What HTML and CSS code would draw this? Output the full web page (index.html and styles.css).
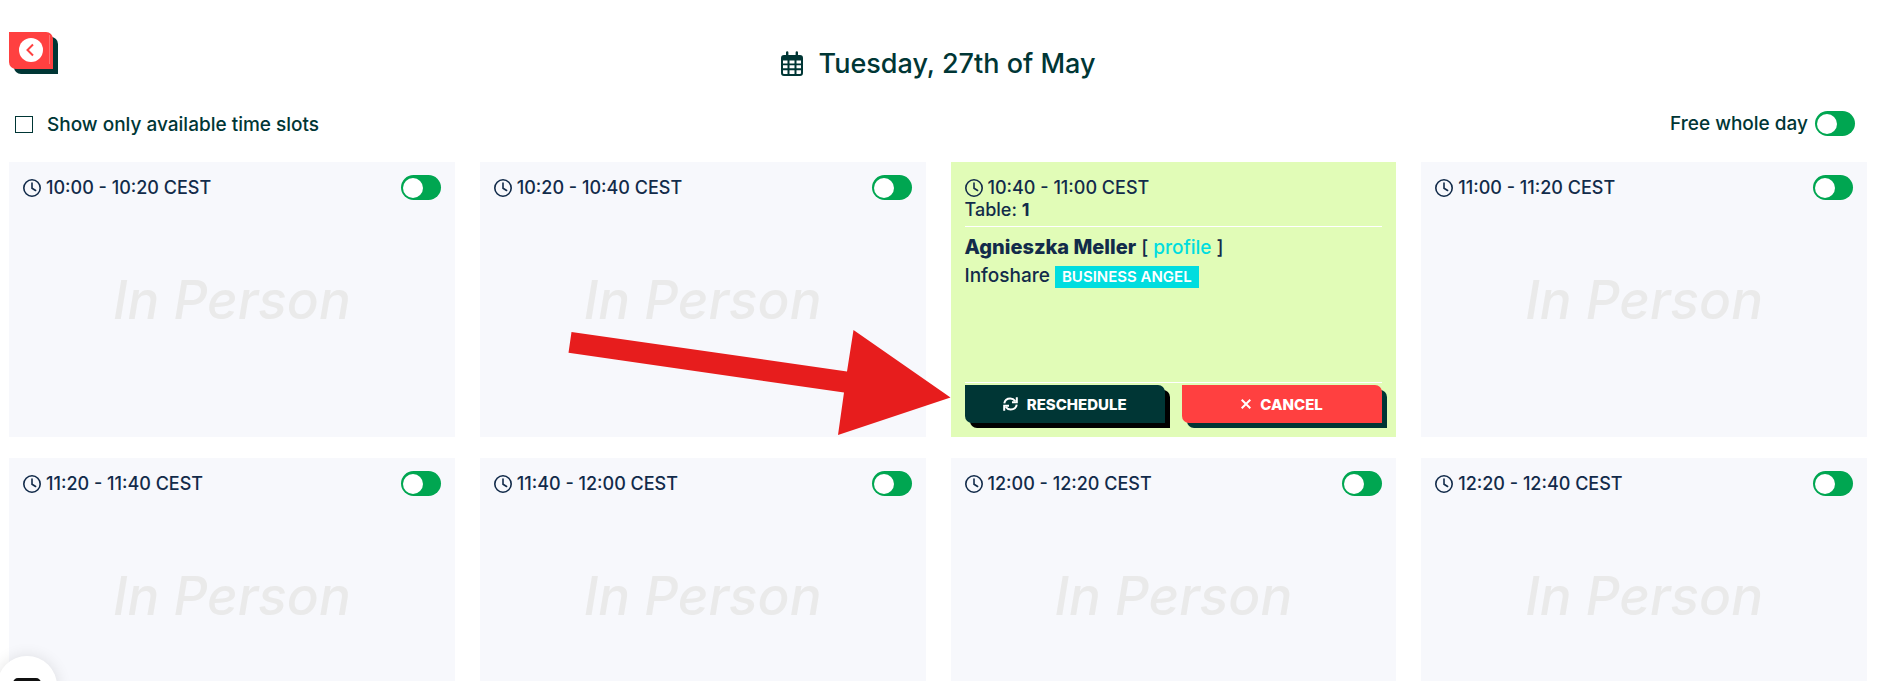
FILE: index.html
```html
<!DOCTYPE html>
<html lang="en">
<head>
    <meta charset="utf-8">
    <title>Tuesday, 27th of May</title>
    <link rel="stylesheet" href="styles.css">
</head>
<body>
    <!-- shared icons -->
    <svg class="sprite" aria-hidden="true">
        <symbol id="clock" viewBox="0 0 18 18">
            <circle cx="9" cy="9" r="8.2" fill="none" stroke="currentColor" stroke-width="1.6"/>
            <path d="M9 4v5.2l3.6 2.3" fill="none" stroke="currentColor" stroke-width="1.6" stroke-linecap="round"/>
        </symbol>
    </svg>

    <main class="schedule">
        <header class="day-header">
            <button class="btn btn-back" aria-label="Back">
                <svg width="24" height="24" viewBox="0 0 24 24">
                    <circle cx="12" cy="12" r="12" fill="#fff"/>
                    <path d="M14 6.500L8.500 12l5.500 5.500" fill="none" stroke="#ff4040" stroke-width="2"/>
                </svg>
            </button>
            <h1 class="day-title">
                <svg width="22" height="26" viewBox="0 0 22 26">
                    <path fill="currentColor" fill-rule="evenodd" d="M5 1.500a1 1 0 0 1 2.400 0V4h7.200V1.500a1 1 0 0 1 2.400 0V4H19a3 3 0 0 1 3 3v15a3 3 0 0 1-3 3H3a3 3 0 0 1-3-3V7a3 3 0 0 1 3-3h2zM2 9.500v3h4.500v-3zM8.500 9.500v3h5v-3zM15.500 9.500v3H20v-3zM2 14.300v3h4.500v-3zM8.500 14.300v3h5v-3zM15.500 14.300v3H20v-3zM2 19.200V22a1 1 0 0 0 1 1h3.500v-3.800zM8.500 19.200V23h5v-3.800zM15.500 19.200V23H19a1 1 0 0 0 1-1v-2.800z"/>
                </svg>
                Tuesday, 27th of May
            </h1>
        </header>

        <div class="filters">
            <label class="filter-label"><input type="checkbox" class="check"> Show only available time slots</label>
            <label class="free-day">Free whole day <input type="checkbox" class="switch"></label>
        </div>

        <section class="slots">
            <article class="slot">
                <div class="slot-head">
                    <span class="time"><svg class="clock"><use href="#clock"/></svg>10:00 - 10:20 CEST</span>
                    <input type="checkbox" class="switch" aria-label="10:00 - 10:20">
                </div>
                <p class="mode">In Person</p>
            </article>

            <article class="slot">
                <div class="slot-head">
                    <span class="time"><svg class="clock"><use href="#clock"/></svg>10:20 - 10:40 CEST</span>
                    <input type="checkbox" class="switch" aria-label="10:20 - 10:40">
                </div>
                <p class="mode">In Person</p>
                <svg class="arrow" viewBox="568 330 383 106" aria-hidden="true">
                    <path fill="#e71d1d" d="M571.500 332L847 371.500L853.500 330L950.500 397.500L838 435L844 392.500L568.500 352.700z"/>
                </svg>
            </article>

            <article class="slot booked">
                <div class="slot-head">
                    <span class="time"><svg class="clock"><use href="#clock"/></svg>10:40 - 11:00 CEST</span>
                </div>
                <p class="table-no">Table: <b>1</b></p>
                <div class="guest">
                    <p class="guest-name"><strong>Agnieszka Meller</strong> [ <a href="#">profile</a> ]</p>
                    <p class="guest-org">Infoshare <span class="badge">BUSINESS ANGEL</span></p>
                </div>
                <div class="actions">
                    <button class="btn btn-reschedule">
                        <svg width="15" height="14" viewBox="0 0 15 14" fill="none" stroke="currentColor" stroke-width="2">
                            <path d="M1.300 6.300C1.800 3.300 4.300 1.500 7.300 1.500c2.200 0 3.700 1 5 2.700M13.700 7.700c-.5 3-3 4.800-6 4.800-2.200 0-3.700-1-5-2.700"/>
                            <path d="M13.800.3v4.900H9M1.200 13.700V8.800H6"/>
                        </svg>
                        RESCHEDULE
                    </button>
                    <button class="btn btn-cancel">
                        <svg width="10" height="10" viewBox="0 0 10 10" fill="none" stroke="currentColor" stroke-width="2">
                            <path d="M.7.7l8.600 8.600M9.300.7L.7 9.300"/>
                        </svg>
                        CANCEL
                    </button>
                </div>
            </article>

            <article class="slot">
                <div class="slot-head">
                    <span class="time"><svg class="clock"><use href="#clock"/></svg>11:00 - 11:20 CEST</span>
                    <input type="checkbox" class="switch" aria-label="11:00 - 11:20">
                </div>
                <p class="mode">In Person</p>
            </article>

            <article class="slot">
                <div class="slot-head">
                    <span class="time"><svg class="clock"><use href="#clock"/></svg>11:20 - 11:40 CEST</span>
                    <input type="checkbox" class="switch" aria-label="11:20 - 11:40">
                </div>
                <p class="mode">In Person</p>
            </article>

            <article class="slot">
                <div class="slot-head">
                    <span class="time"><svg class="clock"><use href="#clock"/></svg>11:40 - 12:00 CEST</span>
                    <input type="checkbox" class="switch" aria-label="11:40 - 12:00">
                </div>
                <p class="mode">In Person</p>
            </article>

            <article class="slot">
                <div class="slot-head">
                    <span class="time"><svg class="clock"><use href="#clock"/></svg>12:00 - 12:20 CEST</span>
                    <input type="checkbox" class="switch" aria-label="12:00 - 12:20">
                </div>
                <p class="mode">In Person</p>
            </article>

            <article class="slot">
                <div class="slot-head">
                    <span class="time"><svg class="clock"><use href="#clock"/></svg>12:20 - 12:40 CEST</span>
                    <input type="checkbox" class="switch" aria-label="12:20 - 12:40">
                </div>
                <p class="mode">In Person</p>
            </article>
        </section>
    </main>

    <button class="chat" aria-label="Chat">
        <svg width="28" height="28" viewBox="0 0 28 28">
            <path fill="#111" d="M5 0h18a5 5 0 0 1 5 5v23l-6-4H5a5 5 0 0 1-5-5V5a5 5 0 0 1 5-5z"/>
        </svg>
    </button>
</body>
</html>
```

FILE: styles.css
```css
* {
    box-sizing: border-box;
}

body {
    margin: 0;
    height: 100vh;
    overflow-y: auto;
    scrollbar-width: none;
    background-color: #fff;
    color: #003635;
    font-family: Inter, "Liberation Sans", sans-serif;
    font-size: 18px;
    font-weight: 500;
    line-height: 23px;
}

p,
h1 {
    margin: 0;
}

.sprite {
    position: absolute;
    width: 0;
    height: 0;
}

.schedule {
    padding: 32px 14px 0 9px;
}

.day-header {
    display: grid;
    grid-template-columns: 1fr auto 1fr;
    align-items: start;
}

.day-title {
    display: flex;
    align-items: center;
    gap: 16px;
    padding-top: 16px;
    font-size: 27px;
    font-weight: 500;
    line-height: 32px;
}

.btn {
    display: flex;
    align-items: center;
    justify-content: center;
    border: none;
    border-radius: 0 7px 0 7px;
    color: #fff;
    font-family: inherit;
    font-size: 15px;
    font-weight: 800;
    cursor: pointer;
}

.btn-back {
    gap: 6px;
    width: 44px;
    height: 37px;
    padding: 0 3px 2px 10px;
    background-color: #ff4040;
    box-shadow: 5px 5px 0 #003635;
}

/* thin divider at the right of the icon */
.btn-back::after {
    content: "";
    width: 1px;
    height: 29px;
    background-color: #ff7070;
}

.btn svg {
    flex-shrink: 0;
}

.filters {
    display: flex;
    justify-content: space-between;
    align-items: center;
    padding: 31px 12px 26px 6px;
    font-size: 19px;
}

.filter-label,
.free-day {
    display: flex;
    align-items: center;
}

.filter-label {
    gap: 14px;
    padding-top: 2px;
}

.free-day {
    gap: 7px;
}

.check {
    appearance: none;
    width: 18px;
    height: 17px;
    margin: 0;
    border: 1px solid #003635;
}

.switch {
    appearance: none;
    display: flex;
    align-items: center;
    width: 40px;
    height: 25px;
    margin: 0;
    padding: 0 2px;
    border-radius: 13px;
    background-color: #00a651;
    cursor: pointer;
}

.switch::before {
    content: "";
    width: 20px;
    height: 20px;
    border-radius: 50%;
    background-color: #fff;
}

.switch:checked {
    justify-content: flex-end;
}

.slots {
    display: grid;
    grid-template-columns: repeat(4, 1fr);
    gap: 21px 25px;
}

.slot {
    position: relative;
    display: flex;
    flex-direction: column;
    min-height: 275px;
    padding: 13px 14px 14px;
    background-color: #f7f8fc;
    color: #122b4a;
}

.slot-head {
    display: flex;
    justify-content: space-between;
    align-items: center;
    min-height: 25px;
}

.time {
    display: flex;
    align-items: center;
    gap: 5px;
}

.clock {
    width: 18px;
    height: 18px;
}

.mode {
    flex: 1;
    padding-top: 70px;
    color: #eaeaea;
    font-size: 53px;
    font-style: italic;
    line-height: 60px;
    text-align: center;
}

.arrow {
    position: absolute;
    z-index: 1;
    top: 168px;
    left: 88px;
    width: 383px;
    height: 106px;
}

.booked {
    background-color: #e1fcb7;
}

.table-no {
    line-height: 20px;
}

.guest {
    flex: 1;
    margin-top: 6px;
    padding-top: 6px;
    border-top: 1px solid #fff;
    font-size: 19px;
}

.guest p {
    line-height: 28px;
}

.guest strong {
    font-size: 20px;
    font-weight: 800;
}

.guest a {
    color: #00dddf;
    text-decoration: none;
}

.badge {
    display: inline-block;
    padding: 0 7px;
    background-color: #00dddf;
    color: #fff;
    font-size: 15px;
    font-weight: 600;
    line-height: 22px;
}

.actions {
    display: grid;
    grid-template-columns: 1fr 1fr;
    gap: 17px;
    padding-top: 2px;
    border-top: 1px solid #fff;
}

.actions .btn {
    gap: 9px;
    height: 38px;
}

.btn-reschedule {
    background-color: #003635;
    box-shadow: 5px 5px 0 #000;
}

.btn-cancel {
    background-color: #ff4040;
    box-shadow: 5px 5px 0 #003635;
}

.chat {
    position: fixed;
    z-index: 2;
    bottom: -35px;
    left: -3px;
    display: flex;
    align-items: flex-start;
    justify-content: center;
    width: 60px;
    height: 60px;
    padding: 22px 0 0;
    border: none;
    border-radius: 50%;
    background-color: #fff;
    box-shadow: 0 1px 16px rgba(0, 0, 0, 0.12);
}
```
